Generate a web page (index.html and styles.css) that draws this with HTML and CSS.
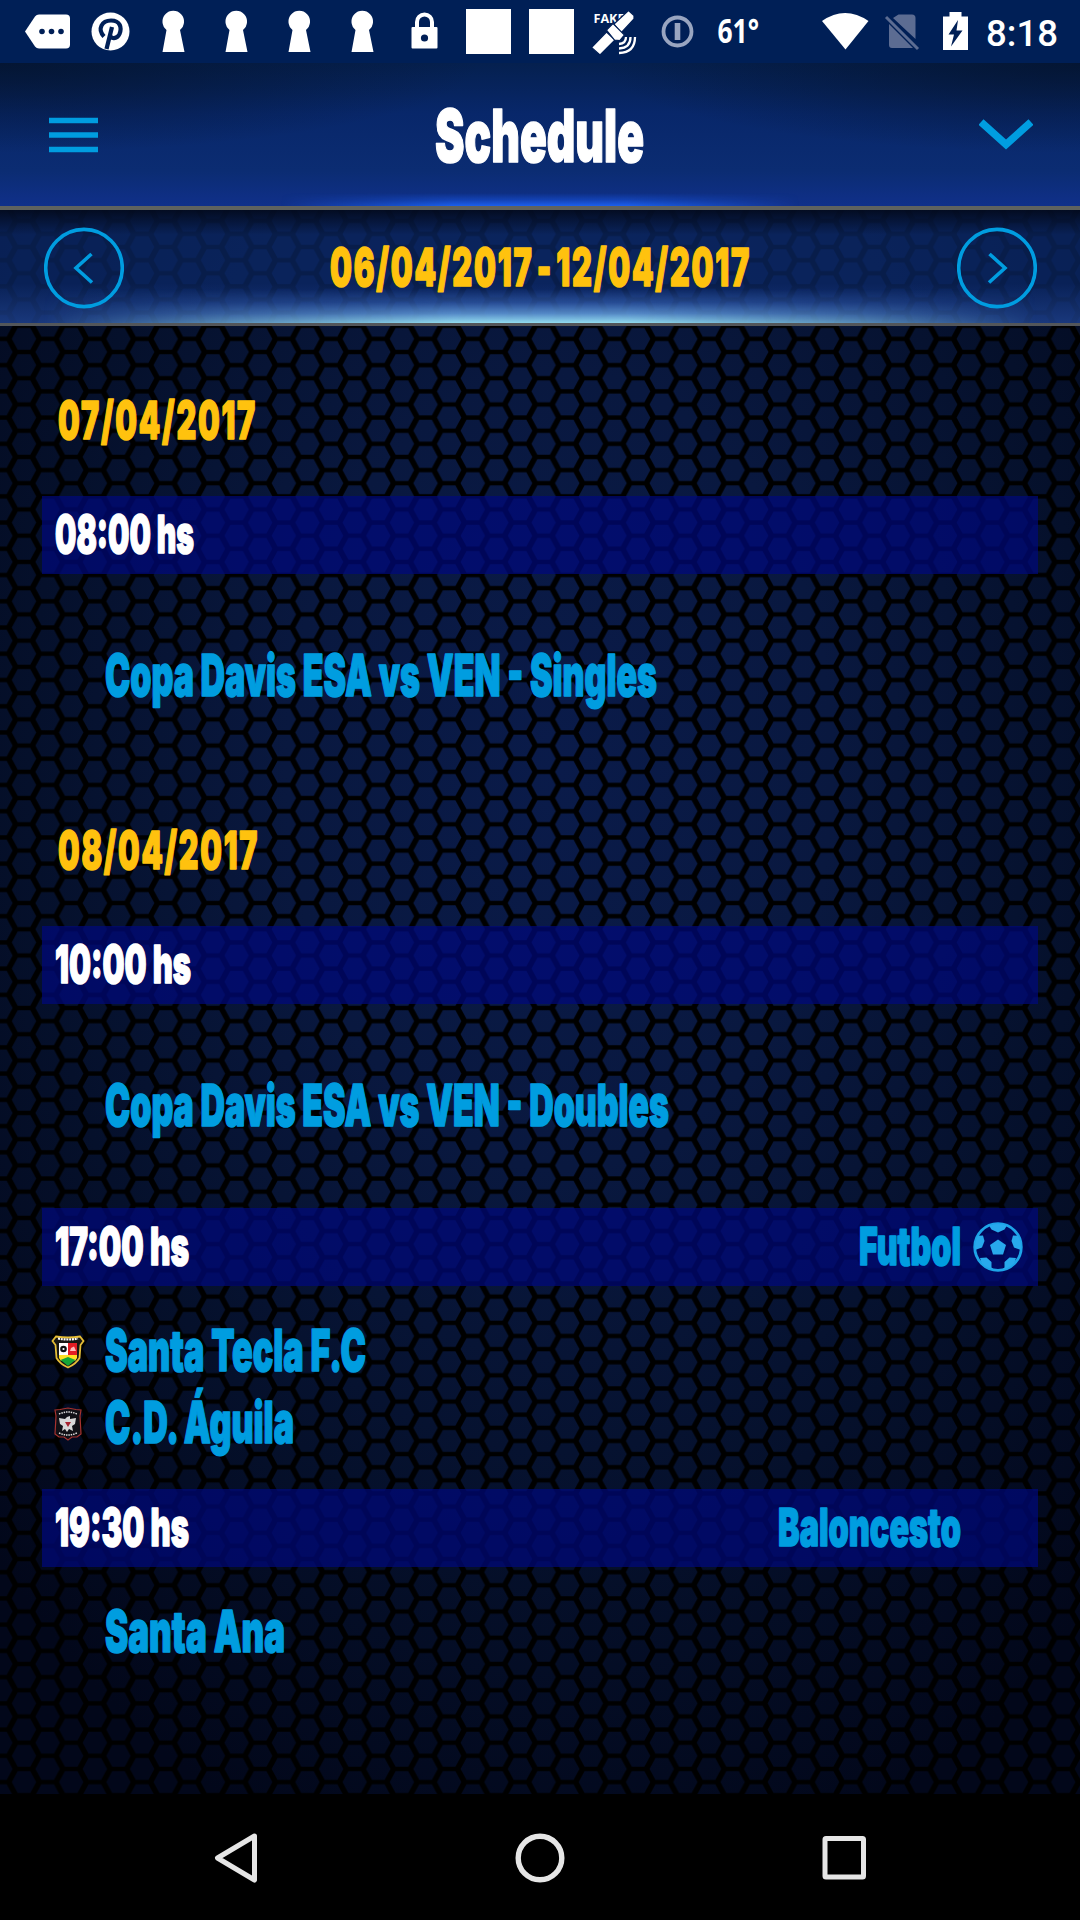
FILE: index.html
```html
<!DOCTYPE html>
<html lang="en">
<head>
<meta charset="utf-8">
<title>Schedule</title>
<link rel="stylesheet" href="styles.css">
</head>
<body>
<div class="app">
  <div class="status">
    <div class="slots">
      <svg class="slot" viewBox="0 0 63 63"><path fill="#fff" d="M9 31.500 19 16.500Q20.500 14.500 23 14.500H50Q54 14.500 54 18.500V44.500Q54 48.500 50 48.500H23Q20.500 48.500 19 46.500Z"/><g fill="#001f56"><circle cx="26" cy="31.500" r="2.800"/><circle cx="35.500" cy="31.500" r="2.800"/><circle cx="45" cy="31.500" r="2.800"/></g></svg>
      <svg class="slot" viewBox="0 0 63 63"><circle cx="31.500" cy="31.500" r="19" fill="#fff"/><g fill="none" stroke="#001f56" stroke-width="4.200"><path d="M25 36.500C18 29 23 20.500 32 20.500C41.500 20.500 43 28 40.500 34C38 39.500 31.500 39 31 35"/><path d="M33 27 27.500 49"/></g></svg>
      <svg class="slot" viewBox="0 0 63 63"><path class="keyhole" d="M20.500 52 24.500 30A10.800 10.800 0 1 1 38 30L42.500 52Z"/></svg>
      <svg class="slot" viewBox="0 0 63 63"><path class="keyhole" d="M20.500 52 24.500 30A10.800 10.800 0 1 1 38 30L42.500 52Z"/></svg>
      <svg class="slot" viewBox="0 0 63 63"><path class="keyhole" d="M20.500 52 24.500 30A10.800 10.800 0 1 1 38 30L42.500 52Z"/></svg>
      <svg class="slot" viewBox="0 0 63 63"><path class="keyhole" d="M20.500 52 24.500 30A10.800 10.800 0 1 1 38 30L42.500 52Z"/></svg>
      <svg class="slot" viewBox="0 0 63 63"><path d="M23 29V22A7.500 7.500 0 0 1 38 22V29" fill="none" stroke="#fff" stroke-width="4"/><rect x="17.500" y="27" width="26" height="21.500" rx="1" fill="#fff"/><circle cx="30.500" cy="38" r="3.600" fill="#001f56"/></svg>
      <svg class="slot" viewBox="0 0 63 63"><rect x="9" y="9" width="45" height="45" fill="#fff"/></svg>
      <svg class="slot" viewBox="0 0 63 63"><rect x="9" y="9" width="45" height="45" fill="#fff"/></svg>
      <svg class="slot" viewBox="0 0 63 63"><text class="fake" x="10.500" y="23" textLength="31" lengthAdjust="spacingAndGlyphs">FAKE</text><g fill="#fff" stroke="#001f56" stroke-width="1.200"><path d="M31 24 45.500 10.500 51 15.500 51 19 38 33Z"/><path d="M8.500 47.500 23.500 32 32 40 17 55Z"/><path d="M23.500 30 30 23.500 41.500 35 37 40.500 31.500 40Z"/></g><g fill="none" stroke="#fff" stroke-width="2.300"><path d="M36 44Q43 43.500 43 37M36 48.500Q47.500 48 47.500 37M36 53Q52 52.500 52 37"/></g></svg>
      <svg class="slot" viewBox="0 0 63 63"><g fill="none" stroke="#99a5c0"><circle cx="31.500" cy="31.500" r="14" stroke-width="3.800"/><path d="M31.500 23V40" stroke-width="5.600"/></g></svg>
      <svg class="slot" viewBox="0 0 63 63"><text class="temp" x="8.500" y="42.500" textLength="41.500" lengthAdjust="spacingAndGlyphs">61°</text></svg>
    </div>
    <svg class="signals" viewBox="0 0 150 63" width="150" height="63"><path fill="#fff" d="M0 21Q23 5 46.500 21L23.500 49.500Z"/><path fill="#5c6c92" d="M76.500 14.500H90Q93.500 14.500 93.500 18V39L71 18ZM67 24 91 48H70Q67 48 67 45Z"/><path d="M64 17 96 49" stroke="#5c6c92" stroke-width="3"/><path fill="#fff" d="M121 16.500H127.500V12H139.500V16.500H146V50H121Z"/><path fill="#001f56" d="M136 20 126.500 34.500H132L129 46.500 140.500 30.500H134.500Z"/></svg>
    <svg class="clock" viewBox="0 0 76 63" width="76" height="63"><text x="0" y="46" textLength="72" lengthAdjust="spacingAndGlyphs">8:18</text></svg>
  </div>

  <header class="header">
    <svg width="49" height="36" viewBox="0 0 49 36"><path d="M0 3.500H49M0 18H49M0 32.500H49" stroke="#009de0" stroke-width="5.600"/></svg>
    <h1 class="title"><svg class="type" width="209" height="80"><text x="0" y="66.500" textLength="209" lengthAdjust="spacingAndGlyphs">Schedule</text></svg></h1>
    <svg width="54" height="32" viewBox="0 0 54 32"><path d="M2 3 27 25.500 52 3" fill="none" stroke="#009de0" stroke-width="7.500"/></svg>
  </header>

  <div class="lower">
    <svg class="mesh" width="1080" height="1584">
      <defs>
        <pattern id="hex" width="47.240" height="26.240" patternUnits="userSpaceOnUse" patternTransform="translate(0.400 142)">
          <g fill="#fff"><path d="M11.400 13.120 17.300 2.300H29.900L35.800 13.120 29.900 23.940H17.300Z"/><path d="M-12.220 0 -6.300 -10.820H6.300L12.220 0 6.300 10.820H-6.300Z"/><path d="M35.020 0 40.940 -10.820H53.540L59.460 0 53.540 10.820H40.940Z"/><path d="M-12.220 26.240 -6.300 15.420H6.300L12.220 26.240 6.300 37H-6.300Z"/><path d="M35.020 26.240 40.940 15.420H53.540L59.460 26.240 53.540 37H40.940Z"/></g>
        </pattern>
        <radialGradient id="light" gradientUnits="userSpaceOnUse" cx="0" cy="0" r="1" gradientTransform="translate(560 560) scale(780 1140)">
          <stop offset="0" stop-color="#0a1b4a"/><stop offset=".35" stop-color="#09183f"/><stop offset=".68" stop-color="#05102b"/><stop offset="1" stop-color="#02071a"/>
        </radialGradient>
        <mask id="cells"><rect width="1080" height="1584" fill="url(#hex)"/></mask>
      </defs>
      <rect width="1080" height="1584" fill="url(#light)" mask="url(#cells)"/>
    </svg>

    <nav class="range">
      <svg width="80" height="82" viewBox="0 0 80 82"><g fill="none" stroke="#009de0" stroke-width="3.600"><ellipse cx="40" cy="41" rx="38.300" ry="38.600"/><path d="M47.500 27 32 41 48 55.500"/></g></svg>
      <svg class="type date" width="421" height="60"><text x="0" y="47.500" textLength="421" lengthAdjust="spacingAndGlyphs">06/04/2017 - 12/04/2017</text></svg>
      <svg width="80" height="82" viewBox="0 0 80 82"><g fill="none" stroke="#009de0" stroke-width="3.600"><ellipse cx="40" cy="41" rx="38.300" ry="38.600"/><path d="M32.500 27 48 41 32 55.500"/></g></svg>
    </nav>

    <main class="list">
      <h2 class="day"><svg class="type date" width="199" height="60"><text x="0" y="47" textLength="199" lengthAdjust="spacingAndGlyphs">07/04/2017</text></svg></h2>
      <div class="bar"><svg class="type hour" width="139" height="60"><text x="0" y="47.500" textLength="139" lengthAdjust="spacingAndGlyphs">08:00 hs</text></svg></div>
      <div class="event"><svg class="type team" width="552" height="60"><text x="0" y="49.500" textLength="552" lengthAdjust="spacingAndGlyphs">Copa Davis ESA vs VEN - Singles</text></svg></div>

      <h2 class="day"><svg class="type date" width="201" height="60"><text x="0" y="47" textLength="201" lengthAdjust="spacingAndGlyphs">08/04/2017</text></svg></h2>
      <div class="bar"><svg class="type hour" width="136" height="60"><text x="0" y="47.500" textLength="136" lengthAdjust="spacingAndGlyphs">10:00 hs</text></svg></div>
      <div class="event"><svg class="type team" width="564" height="60"><text x="0" y="49.500" textLength="564" lengthAdjust="spacingAndGlyphs">Copa Davis ESA vs VEN - Doubles</text></svg></div>

      <div class="bar">
        <svg class="type hour" width="134" height="60"><text x="0" y="47.500" textLength="134" lengthAdjust="spacingAndGlyphs">17:00 hs</text></svg>
        <svg class="type sport" width="102" height="60"><text x="0" y="47.500" textLength="102" lengthAdjust="spacingAndGlyphs">Futbol</text></svg>
        <div class="badge"><svg width="50" height="50" viewBox="0 0 50 50"><defs><clipPath id="ball"><circle cx="25" cy="25" r="23"/></clipPath></defs><circle cx="25" cy="25" r="23.300" fill="none" stroke="#1da4e8" stroke-width="2.800"/><g fill="#28a9ec" clip-path="url(#ball)"><path d="M25 17.500 33 23 30 32.500H20L17 23Z"/><path d="M15 2 18.500 7.500 25 10.500 31.500 7.500 35 2Z"/><path d="M1 14 10 13.500 11.500 19 9 25.500 2 28Z"/><path d="M49 14 40 13.500 38.500 19 41 25.500 48 28Z"/><path d="M7 36 13.500 35.500 18.500 40 18.500 45.500 21.500 49 10 45Z"/><path d="M43 36 36.500 35.500 31.500 40 31.500 45.500 28.500 49 40 45Z"/></g></svg></div>
      </div>
      <div class="teams">
        <div class="row"><svg class="crest" width="36" height="34" viewBox="0 0 36 34"><path d="M6 1.500Q18 3.500 30 1.500L33.500 6 30.500 10 29.500 23Q26 29 18 32.500Q10 29 6.500 23L5.500 10 2.500 6Z" fill="#181714" stroke="#e5bd36" stroke-width="1.800"/><path d="M9 8H18V20H9Z" fill="#fff"/><path d="M18 8H27V20H18Z" fill="#e31d24"/><path d="M9 20H27V23L25 26H11L9 23Z" fill="#ffe022"/><path d="M10.500 25 18 22 25.500 25 18 31Z" fill="#16a637"/><circle cx="13.500" cy="14" r="3.300" fill="#111"/><circle cx="13.500" cy="14" r="1.100" fill="#fff"/><path d="M20 16 21 13 24 11.500 26 16Z" fill="#fbb"/><path d="M8 3.500Q18 5.500 28 3.500" fill="none" stroke="#fff" stroke-width="2.200" stroke-dasharray="2 .8"/></svg><svg class="type team" width="261" height="60"><text x="0" y="49" textLength="261" lengthAdjust="spacingAndGlyphs">Santa Tecla F.C</text></svg></div>
        <div class="row"><svg class="crest" width="36" height="34" viewBox="0 0 36 34"><path d="M5 3 10 2.500 18 1 26 2.500 31 3 30 9 31 27 27 30 22 30 18 33 14 30 9 30 5 27 6 9Z" fill="#101016" stroke="#a8322f" stroke-width="1.200"/><path d="M9 7Q18 3 27 7M9 26Q18 30 27 26" fill="none" stroke="#ddd" stroke-width="1.500" stroke-dasharray="1.500 .9"/><path d="M17 10 20 9 20 12 26 11 25 17 22 19 23 24 19 22 17 25 15 22 12 24 13 19 10 17 9 11 15 12Z" fill="#d8d8d8"/><path d="M15 15 21 15 18 20Z" fill="#a82430"/></svg><svg class="type team" width="189" height="60"><text x="0" y="48.500" textLength="189" lengthAdjust="spacingAndGlyphs">C.D. Águila</text></svg></div>
      </div>

      <div class="bar">
        <svg class="type hour" width="134" height="60"><text x="0" y="47.500" textLength="134" lengthAdjust="spacingAndGlyphs">19:30 hs</text></svg>
        <svg class="type sport" width="183" height="60"><text x="0" y="47.500" textLength="183" lengthAdjust="spacingAndGlyphs">Baloncesto</text></svg>
        <div class="badge"></div>
      </div>
      <div class="teams">
        <div class="row"><span class="crest"></span><svg class="type team" width="180" height="60"><text x="0" y="49" textLength="180" lengthAdjust="spacingAndGlyphs">Santa Ana</text></svg></div>
      </div>
    </main>
  </div>

  <div class="softkeys">
    <svg width="54" height="54" viewBox="0 0 54 54"><path d="M45.500 5 8.500 27 45.500 49Z" fill="none" stroke="#e6e6e6" stroke-width="5" stroke-linejoin="round"/></svg>
    <svg width="54" height="54" viewBox="0 0 54 54"><circle cx="27" cy="27" r="21.800" fill="none" stroke="#e6e6e6" stroke-width="5.400"/></svg>
    <svg width="54" height="54" viewBox="0 0 54 54"><rect x="8" y="7.500" width="38.500" height="38.500" rx="1" fill="none" stroke="#e6e6e6" stroke-width="5"/></svg>
  </div>
</div>
</body>
</html>
```
FILE: styles.css
```css
* { box-sizing: border-box; }
body { margin: 0; background: #000; font-family: Inter, "Liberation Sans", sans-serif; }
svg { display: block; flex: none; }
h1, h2 { margin: 0; }

.app { width: 1080px; height: 1920px; display: flex; flex-direction: column; overflow: hidden; }

.status { height: 63px; flex: none; display: flex; padding-left: 16px; background: #001f56; }
.slots { display: flex; width: 806px; flex: none; }
.slot { width: 63px; height: 63px; }
.keyhole { fill: #fff; }
.fake { font: 700 13px "Open Sans", sans-serif; fill: #fff; }
.temp { font: 700 34px "Open Sans", sans-serif; fill: #fff; }
.clock { margin-left: 14px; }
.clock text { font: 500 37px Roboto, sans-serif; fill: #fff; }

.header {
  height: 147px; flex: none; display: flex; align-items: center; justify-content: space-between;
  position: relative;
  padding: 0 47px 0 49px; border-bottom: 4px solid #5f625f;
  background:
    radial-gradient(ellipse 480px 90px at 0 0, rgba(4, 18, 42, .75), transparent),
    radial-gradient(ellipse 480px 90px at 100% 0, rgba(4, 18, 42, .75), transparent),
    linear-gradient(#05204f, #08276a 35%, #0b2c72 75%, #10308a);
}
.title { padding-left: 2px; }
.header::after, .range::before {
  content: ""; position: absolute; left: 0; right: 0; bottom: 0;
}
.header::after {
  height: 13px;
  background: linear-gradient(transparent, rgba(26, 92, 240, .45) 55%, #1b60ee);
  -webkit-mask-image: linear-gradient(90deg, transparent 26%, #000 42%, #000 58%, transparent 74%);
  mask-image: linear-gradient(90deg, transparent 26%, #000 42%, #000 58%, transparent 74%);
}

.lower { position: relative; height: 1585px; flex: none; display: flex; flex-direction: column; }
.mesh { position: absolute; inset: 0; }

.range {
  position: relative; height: 116px; display: flex; align-items: center; justify-content: space-between;
  padding: 2px 43px 0 44px; border-bottom: 3px solid #53565a;
  background:
    linear-gradient(rgba(2, 8, 24, .85), transparent 22%),
    linear-gradient(transparent 65%, rgba(50, 90, 180, .4)),
    rgba(12, 44, 112, .66);
}
.range::before {
  height: 34px;
  background: linear-gradient(transparent, rgba(70, 120, 205, .4) 40%, rgba(105, 165, 225, .75) 72%, #93dcee);
  -webkit-mask-image: linear-gradient(90deg, transparent 4%, rgba(0, 0, 0, .55) 22%, #000 42%, #000 58%, rgba(0, 0, 0, .55) 78%, transparent 96%);
  mask-image: linear-gradient(90deg, transparent 4%, rgba(0, 0, 0, .55) 22%, #000 42%, #000 58%, rgba(0, 0, 0, .55) 78%, transparent 96%);
}
.range svg { position: relative; }

.list { position: relative; padding: 22px 42px 0; }
.day { height: 148px; display: flex; align-items: center; padding-left: 16px; }
.bar { height: 78px; display: flex; align-items: center; padding: 0 15px 0 13px; background: rgba(0, 8, 126, .7); }
.sport { margin-left: auto; }
.badge { width: 50px; height: 50px; margin-left: 12px; }
.event { height: 204px; display: flex; align-items: center; padding-left: 63px; }
.teams { padding: 30px 0 30px 8px; }
.row { height: 72px; display: flex; align-items: center; gap: 19px; }
.teams + .bar { margin-top: -1px; }
.crest { width: 36px; height: 34px; flex: none; }

.type { overflow: visible; font-weight: 900; font-size: 52.500px; stroke-width: 1.600px; stroke-linejoin: round; }
.title .type { font-size: 73px; fill: #fff; stroke: #fff; }
.date { fill: #ffc20e; stroke: #ffc20e; letter-spacing: 3px; }
.range .date { word-spacing: -8px; }
.hour { fill: #fff; stroke: #fff; }
.sport { fill: #009de0; stroke: #009de0; }
.team { font-size: 57.500px; fill: #009de0; stroke: #009de0; }

.softkeys { height: 125px; flex: none; display: flex; justify-content: space-between; align-items: center; padding: 0 209px; background: #000; }
```
